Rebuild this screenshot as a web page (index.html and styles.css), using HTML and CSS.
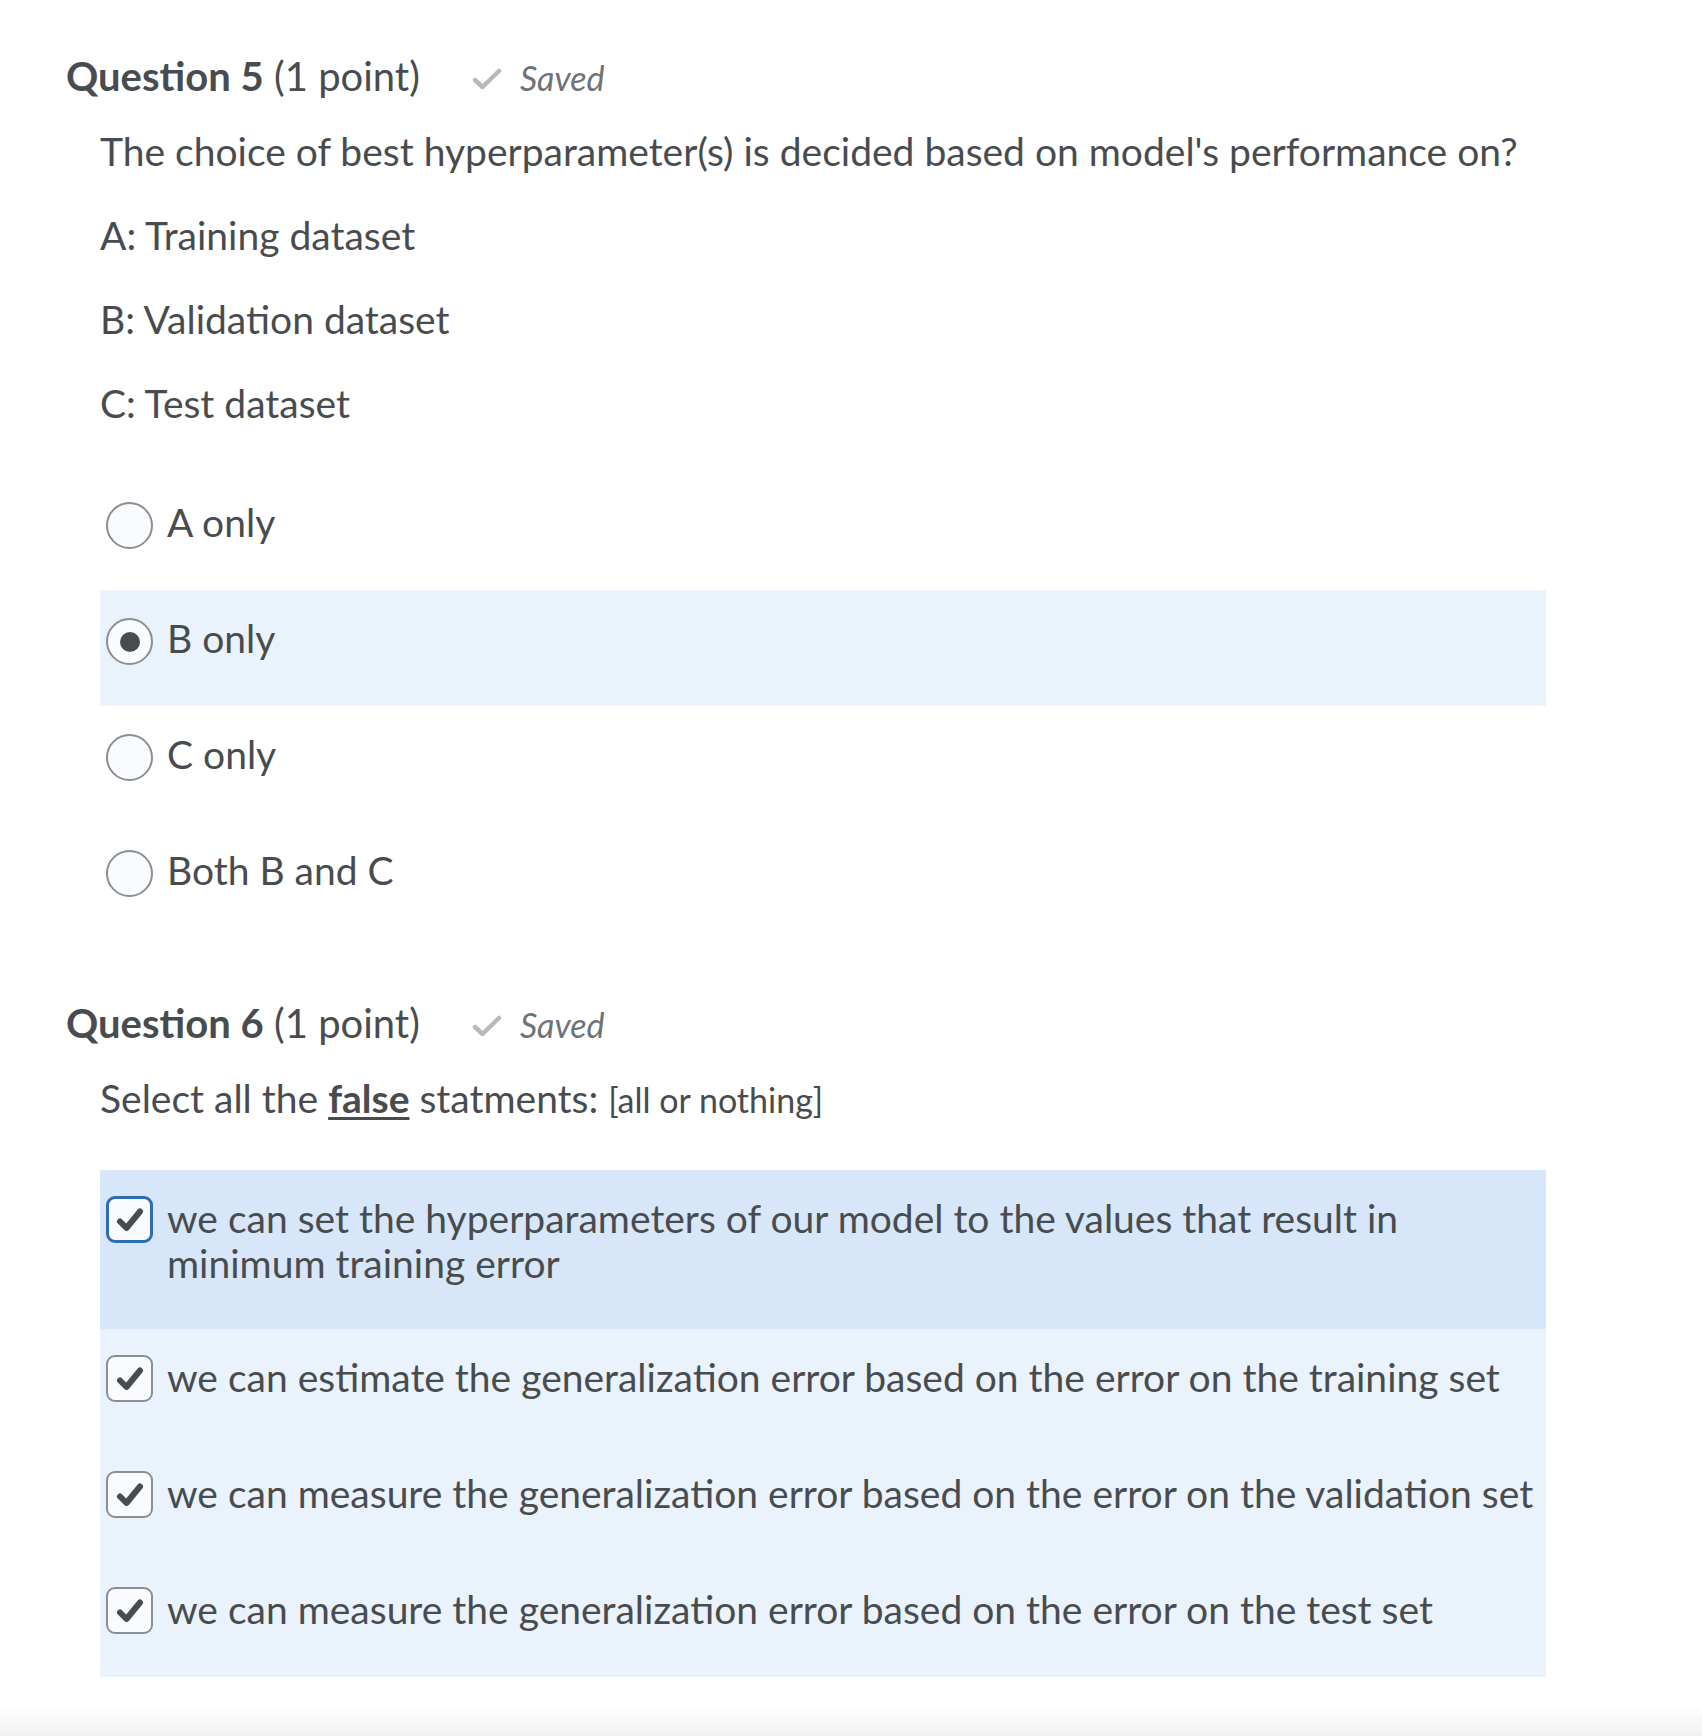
FILE: index.html
```html
<!DOCTYPE html>
<html lang="en">
<head>
<meta charset="utf-8">
<title>Quiz</title>
<link rel="stylesheet" href="styles.css">
</head>
<body>
<main class="quiz">
  <section class="question q5">
    <h2 class="q-head">
      <span class="q-title"><strong>Question 5</strong> (1 point)</span>
      <span class="saved">
        <svg class="saved-check" width="30" height="22" viewBox="0 0 30 22" aria-hidden="true"><path d="M3 12 L10.5 19 L27 3" fill="none" stroke="#b6babc" stroke-width="4.5" stroke-linecap="round" stroke-linejoin="round"/></svg>
        <em>Saved</em>
      </span>
    </h2>
    <div class="q-body">
      <p class="q-text">The choice of best hyperparameter(s) is decided based on model's performance on?</p>
      <p class="q-item">A: Training dataset</p>
      <p class="q-item">B: Validation dataset</p>
      <p class="q-item">C: Test dataset</p>
      <ul class="options">
        <li class="option"><span class="radio"></span><span class="label">A only</span></li>
        <li class="option selected"><span class="radio checked"></span><span class="label">B only</span></li>
        <li class="option"><span class="radio"></span><span class="label">C only</span></li>
        <li class="option"><span class="radio"></span><span class="label">Both B and C</span></li>
      </ul>
    </div>
  </section>

  <section class="question q6">
    <h2 class="q-head">
      <span class="q-title"><strong>Question 6</strong> (1 point)</span>
      <span class="saved">
        <svg class="saved-check" width="30" height="22" viewBox="0 0 30 22" aria-hidden="true"><path d="M3 12 L10.5 19 L27 3" fill="none" stroke="#b6babc" stroke-width="4.5" stroke-linecap="round" stroke-linejoin="round"/></svg>
        <em>Saved</em>
      </span>
    </h2>
    <div class="q-body">
      <p class="q-text q-select">Select all the <strong class="false">false</strong> statments: <span class="small">[all or nothing]</span></p>
      <ul class="options checks">
        <li class="option selected focus"><span class="checkbox focused"><svg width="47" height="47" viewBox="0 0 47 47" aria-hidden="true"><path d="M14 25.5 L20.5 32 L34 15.5" fill="none" stroke="#494c4e" stroke-width="6" stroke-linecap="round" stroke-linejoin="round"/></svg></span><span class="label">we can set the hyperparameters of our model to the values that result in minimum training error</span></li>
        <li class="option selected"><span class="checkbox"><svg width="47" height="47" viewBox="0 0 47 47" aria-hidden="true"><path d="M14 25.5 L20.5 32 L34 15.5" fill="none" stroke="#494c4e" stroke-width="6" stroke-linecap="round" stroke-linejoin="round"/></svg></span><span class="label">we can estimate the generalization error based on the error on the training set</span></li>
        <li class="option selected"><span class="checkbox"><svg width="47" height="47" viewBox="0 0 47 47" aria-hidden="true"><path d="M14 25.5 L20.5 32 L34 15.5" fill="none" stroke="#494c4e" stroke-width="6" stroke-linecap="round" stroke-linejoin="round"/></svg></span><span class="label">we can measure the generalization error based on the error on the validation set</span></li>
        <li class="option selected"><span class="checkbox"><svg width="47" height="47" viewBox="0 0 47 47" aria-hidden="true"><path d="M14 25.5 L20.5 32 L34 15.5" fill="none" stroke="#494c4e" stroke-width="6" stroke-linecap="round" stroke-linejoin="round"/></svg></span><span class="label">we can measure the generalization error based on the error on the test set</span></li>
      </ul>
    </div>
  </section>
</main>
</body>
</html>
```

FILE: styles.css
```css
html, body {
  margin: 0;
  padding: 0;
}

body {
  min-height: 1736px;
  background: linear-gradient(to bottom, #ffffff 0, #ffffff 1706px, #f2f2f2 1736px);
  font-family: Lato, "Open Sans", "Liberation Sans", sans-serif;
  color: #494c4e;
}

.quiz {
  padding: 51px 0 0 66px;
  width: 1480px;
}

.q-head {
  display: flex;
  align-items: baseline;
  margin: 0;
  font-size: 40px;
  line-height: 50px;
  font-weight: 400;
}

.q-title strong {
  font-weight: 700;
}

.saved {
  display: inline-flex;
  align-items: baseline;
  margin-left: 52px;
  font-size: 34px;
  color: #6e7376;
}

.saved-check {
  margin-right: 18px;
  position: relative;
  top: -1px;
}

.saved em {
  font-style: italic;
}

.q-body {
  padding-left: 34px;
}

.q-body p {
  margin: 0;
  font-size: 39px;
  line-height: 46px;
}

.q-text {
  padding-top: 25px;
}

.q-item {
  margin-top: 38px !important;
}

.options {
  list-style: none;
  margin: 48px 0 0;
  padding: 0;
}

.option {
  display: flex;
  align-items: flex-start;
  padding: 26px 0 45px 6px;
  font-size: 39px;
  line-height: 45px;
}

.option.selected {
  background: #eaf2fc;
}

.option.focus {
  background: #d7e6f8;
  padding-bottom: 43px;
}

.label {
  margin-left: 14px;
}

.radio {
  flex: none;
  box-sizing: border-box;
  width: 47px;
  height: 47px;
  margin: 2px 0 -4px;
  border: 2px solid #8a8f92;
  border-radius: 50%;
  background: #f9fbff;
  display: flex;
  align-items: center;
  justify-content: center;
}

.radio.checked::after {
  content: "";
  width: 20px;
  height: 20px;
  border-radius: 50%;
  background: #494c4e;
}

.q6 {
  margin-top: 60px;
}

.q-select {
  padding-top: 25px;
}

.small {
  font-size: 34px;
}

.false {
  font-weight: 700;
  text-decoration: underline;
  text-decoration-thickness: 3px;
  text-underline-offset: 4px;
}

.checks {
  margin-top: 47px;
}

.checkbox {
  flex: none;
  box-sizing: border-box;
  width: 47px;
  height: 47px;
  margin-bottom: -2px;
  border: 2px solid #8a8f92;
  border-radius: 9px;
  background: #f9fbff;
  display: flex;
  align-items: center;
  justify-content: center;
  overflow: hidden;
}

.checkbox svg {
  flex: none;
}

.checkbox.focused {
  border: 3px solid #2d6db5;
}
```
